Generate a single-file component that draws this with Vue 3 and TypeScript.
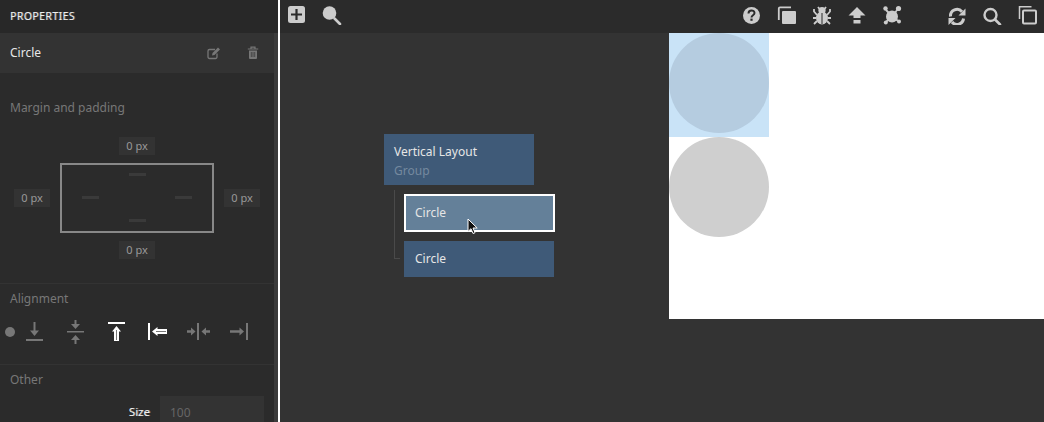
<script setup lang="ts">
const marginDashes = ['top', 'left', 'right', 'bottom']
</script>

<template>
  <div class="app">
    <aside class="panel">
      <div class="panel-header">PROPERTIES</div>
      <div class="panel-main">
        <div class="panel-scroll">
          <div class="selected-row">
            <span class="selected-name">Circle</span>
            <svg class="row-icon edit" width="14" height="14" viewBox="0 0 14 14">
              <path d="M10 7.500V11a1.500 1.500 0 0 1-1.500 1.500h-6A1.500 1.500 0 0 1 1 11V5a1.500 1.500 0 0 1 1.500-1.500H8" fill="none" stroke="#777" stroke-width="1.300" />
              <path d="M5 9.500 5.500 7 11 1.500l2 2L7.500 9z" fill="#777" />
            </svg>
            <svg class="row-icon trash" width="12" height="14" viewBox="0 0 12 14">
              <path d="M4 2.500V1.200h4v1.300M.8 3h10.400" fill="none" stroke="#777" stroke-width="1.200" />
              <path d="M2 4.500h8V12a1 1 0 0 1-1 1H3a1 1 0 0 1-1-1z" fill="#777" />
              <path d="M4.300 6v5M6 6v5M7.700 6v5" stroke="#333" stroke-width=".7" />
            </svg>
          </div>

          <section class="section margin-section">
            <h3 class="section-title">Margin and padding</h3>
            <div class="margin-widget">
              <span class="chip chip-top">0 px</span>
              <span class="chip chip-left">0 px</span>
              <div class="margin-box">
                <i v-for="d in marginDashes" :key="d" class="dash" :class="'dash-' + d"></i>
              </div>
              <span class="chip chip-right">0 px</span>
              <span class="chip chip-bottom">0 px</span>
            </div>
          </section>

          <section class="section align-section">
            <h3 class="section-title">Alignment</h3>
            <div class="align-row">
              <span class="align-dot"></span>
              <svg width="24" height="24" viewBox="0 0 24 24" fill="#777">
                <rect x="3" y="19" width="17" height="2" />
                <rect x="10.500" y="2" width="2" height="10" />
                <path d="M7 10.500h9l-4.500 5.500z" />
              </svg>
              <svg width="24" height="24" viewBox="0 0 24 24" fill="#777">
                <rect x="3" y="11" width="17" height="1.500" />
                <rect x="10.500" y="0" width="2" height="5" />
                <path d="M7 4h9l-4.500 5z" />
                <rect x="10.500" y="19" width="2" height="5" />
                <path d="M7 20h9l-4.500-5z" />
              </svg>
              <svg width="24" height="24" viewBox="0 0 24 24">
                <rect x="3" y="2" width="17" height="2" fill="#fff" />
                <path d="M11.500 6 7 11.500h2V21h5v-9.500h2z" fill="#fff" />
                <path d="M11.500 10v10" stroke="#777" stroke-width="1" />
              </svg>
              <svg width="24" height="24" viewBox="0 0 24 24">
                <rect x="2" y="3" width="2" height="17" fill="#fff" />
                <path d="M6 11.500 11.500 7v2H21v5h-9.500v2z" fill="#fff" />
                <path d="M10 11.500h10" stroke="#777" stroke-width="1" />
              </svg>
              <svg width="24" height="24" viewBox="0 0 24 24" fill="#777">
                <rect x="10" y="3" width="2" height="17" />
                <path d="M0 10.300h4V7.500l4.500 4L4 15.500v-2.800H0z" />
                <path d="M23 10.300h-4V7.500l-4.500 4 4.500 4v-2.800h4z" />
              </svg>
              <svg width="24" height="24" viewBox="0 0 24 24" fill="#777">
                <rect x="18" y="3" width="2" height="17" />
                <path d="M2 10.300h9.500V7.500l4.500 4-4.500 4v-2.800H2z" />
              </svg>
            </div>
          </section>

          <section class="section other-section">
            <h3 class="section-title">Other</h3>
            <div class="field-row">
              <label class="field-label">Size</label>
              <div class="field-input">100</div>
            </div>
          </section>
        </div>
        <div class="scrollbar"></div>
      </div>
    </aside>

    <main class="workspace">
      <header class="toolbar">
        <div class="tool-group">
          <svg class="tool" viewBox="0 0 20 20">
            <rect x="1" y="1" width="17" height="17" rx="2.500" fill="#ccc" />
            <path d="M9.500 4v11M4 9.500h11" stroke="#2b2b2b" stroke-width="2.200" />
          </svg>
          <svg class="tool" viewBox="0 0 20 20">
            <circle cx="7.500" cy="8" r="6.800" fill="#ccc" />
            <path d="M12.500 13.500 18 19" stroke="#ccc" stroke-width="2.600" stroke-linecap="round" />
          </svg>
        </div>
        <div class="tool-group group-main">
          <svg class="tool" viewBox="0 0 20 20">
            <circle cx="9.500" cy="10.500" r="8.500" fill="#ccc" />
            <path d="M6.500 8.500c0-4 6-4 6-.4 0 2.200-3 2.200-3 4.400" fill="none" stroke="#2b2b2b" stroke-width="2" />
            <rect x="8.400" y="13.600" width="2.200" height="2.200" fill="#2b2b2b" />
          </svg>
          <svg class="tool" viewBox="0 0 20 20">
            <path d="M1.800 15V3.500a1.200 1.200 0 0 1 1.200-1.200h11" fill="none" stroke="#ccc" stroke-width="1.800" />
            <rect x="5" y="6" width="14" height="13" rx="1" fill="#ccc" />
          </svg>
          <svg class="tool" viewBox="0 0 20 20">
            <ellipse cx="10" cy="13" rx="6" ry="6.500" fill="#ccc" />
            <circle cx="10" cy="5.500" r="3.600" fill="#ccc" />
            <path d="M10 8v11" stroke="#2b2b2b" stroke-width="1" />
            <path d="M5 10 2 6.500V4M15 10l3-3.500V4M4 13H1M16 13h3M5 16l-3 3M15 16l3 3M7.500 4 6 2M12.500 4 14 2" fill="none" stroke="#ccc" stroke-width="1.800" />
          </svg>
          <svg class="tool" viewBox="0 0 20 20">
            <path d="M10 2 1.500 10.500h5V13h7v-2.500h5z" fill="#ccc" />
            <rect x="6.500" y="15" width="7" height="3.500" fill="#ccc" />
          </svg>
          <svg class="tool" viewBox="0 0 20 20">
            <path d="M4 5l6 6 6-7M10 11l-6 6M10 11l6 5" stroke="#ccc" stroke-width="1.800" fill="none" />
            <circle cx="10" cy="11.500" r="6" fill="#ccc" />
            <circle cx="3.500" cy="3.500" r="2.200" fill="#ccc" />
            <circle cx="16.500" cy="3.500" r="2.600" fill="#ccc" />
            <circle cx="3.800" cy="17.500" r="2" fill="#ccc" />
            <circle cx="17" cy="16.500" r="2" fill="#ccc" />
          </svg>
        </div>
        <div class="tool-group">
          <svg class="tool" viewBox="0 0 20 20">
            <path d="M3.500 11.500A6.500 6.500 0 0 1 15 6.800" fill="none" stroke="#ccc" stroke-width="3" />
            <path d="M18.500 3.500v7h-7z" fill="#ccc" />
            <path d="M16.500 13.500A6.500 6.500 0 0 1 5 17" fill="none" stroke="#ccc" stroke-width="3" />
            <path d="M1.500 20v-7h7z" fill="#ccc" />
          </svg>
          <svg class="tool" viewBox="0 0 20 20">
            <circle cx="8.500" cy="10" r="6" fill="none" stroke="#ccc" stroke-width="2.400" />
            <path d="M13 14.500 18 19.500" stroke="#ccc" stroke-width="2.600" stroke-linecap="round" />
          </svg>
          <svg class="tool" viewBox="0 0 20 20">
            <path d="M2.500 14V1.800h12" fill="none" stroke="#ccc" stroke-width="1.500" />
            <rect x="6" y="5.500" width="13" height="13" rx="1" fill="none" stroke="#ccc" stroke-width="2" />
          </svg>
        </div>
      </header>

      <div class="canvas">
        <div class="tree">
          <div class="node group-node">
            <div class="node-title">Vertical Layout</div>
            <div class="node-type">Group</div>
          </div>
          <div class="children">
            <div class="node child selected">Circle</div>
            <div class="node child">Circle</div>
          </div>
          <svg class="cursor" width="13" height="18" viewBox="0 0 13 18">
            <path d="M1 1v12.500l3-2.800 2 4.800 2-.8-2-4.700h4.200z" fill="#111" stroke="#fff" stroke-width="1" />
          </svg>
        </div>

        <div class="page">
          <div class="page-item highlighted"><div class="circle"></div></div>
          <div class="page-item"><div class="circle"></div></div>
        </div>
      </div>
    </main>
  </div>
</template>

<style>
html,
body {
  margin: 0;
  background: #333;
}
</style>

<style scoped>
.app {
  display: flex;
  width: 1044px;
  height: 422px;
  overflow: hidden;
  font-family: "Noto Sans", "Open Sans", sans-serif;
  background: #333;
}

.panel {
  width: 280px;
  flex: none;
  display: flex;
  flex-direction: column;
  box-sizing: border-box;
  border-right: 2px solid #fff;
  background: #2b2b2b;
}

.panel-header {
  height: 33px;
  flex: none;
  padding-left: 10px;
  line-height: 32px;
  font-size: 10.500px;
  letter-spacing: 0.4px;
  color: #f0f0f0;
  text-shadow: 1px 0 0 rgba(255, 255, 255, 0.35);
  background: #282828;
}

.panel-main {
  flex: 1;
  display: flex;
  min-height: 0;
}

.panel-scroll {
  flex: 1;
  min-width: 0;
  overflow: hidden;
}

.scrollbar {
  width: 4px;
  flex: none;
  background: #3b3b3b;
}

.selected-row {
  height: 40px;
  display: flex;
  align-items: center;
  padding-left: 10px;
  background: #333;
}

.selected-name {
  flex: 1;
  padding-bottom: 2px;
  font-size: 12px;
  color: #e8e8e8;
}

.row-icon.edit {
  margin-right: 26px;
}

.row-icon.trash {
  margin-right: 15px;
}

.section-title {
  margin: 0;
  padding-left: 10px;
  font-size: 12px;
  line-height: 20px;
  font-weight: 400;
  color: #777;
}

.section {
  box-sizing: border-box;
}

.margin-section {
  padding-top: 25px;
  padding-bottom: 24px;
}

.margin-widget {
  margin: 19px 0 0 14px;
  display: grid;
  grid-template-columns: 36px 154px 36px;
  grid-template-rows: 18px 70px 18px;
  column-gap: 10px;
  row-gap: 8px;
  width: 246px;
  align-items: center;
  justify-items: center;
}

.chip {
  width: 36px;
  height: 18px;
  line-height: 18px;
  text-align: center;
  font-size: 11px;
  color: #999;
  background: #333;
}

.chip-top {
  grid-column: 2;
  grid-row: 1;
}

.chip-left {
  grid-column: 1;
  grid-row: 2;
}

.chip-right {
  grid-column: 3;
  grid-row: 2;
}

.chip-bottom {
  grid-column: 2;
  grid-row: 3;
}

.margin-box {
  grid-column: 2;
  grid-row: 2;
  width: 154px;
  height: 70px;
  box-sizing: border-box;
  border: 2px solid #888;
  padding: 8px 20px 9px;
  display: grid;
  grid-template-columns: 17px 1fr 17px;
  grid-template-rows: 3px 1fr 3px;
}

.dash {
  display: block;
  width: 17px;
  height: 3px;
  background: #3a3a3a;
}

.dash-top {
  grid-column: 2;
  grid-row: 1;
  justify-self: center;
}

.dash-left {
  grid-column: 1;
  grid-row: 2;
  align-self: center;
}

.dash-right {
  grid-column: 3;
  grid-row: 2;
  align-self: center;
}

.dash-bottom {
  grid-column: 2;
  grid-row: 3;
  justify-self: center;
}

.align-section {
  border-top: 1px solid #333;
  padding-top: 5px;
  padding-bottom: 20px;
}

.align-row {
  margin-top: 11px;
  display: flex;
  align-items: center;
  gap: 17px;
  padding-left: 5px;
}

.align-row svg {
  display: block;
  flex: none;
}

.align-dot {
  width: 10px;
  height: 10px;
  margin-right: -9px;
  border-radius: 50%;
  background: #777;
}

.other-section {
  border-top: 1px solid #333;
  padding-top: 5px;
}

.field-row {
  margin-top: 6px;
  display: flex;
  align-items: flex-start;
}

.field-label {
  width: 150px;
  padding-top: 7px;
  text-align: right;
  font-size: 11.500px;
  line-height: 18px;
  color: #f0f0f0;
  text-shadow: 1px 0 0 rgba(255, 255, 255, 0.35);
}

.field-input {
  width: 94px;
  height: 28px;
  margin-left: 10px;
  padding-left: 10px;
  line-height: 33px;
  font-size: 12px;
  color: #666;
  background: #333;
}

.workspace {
  flex: 1;
  min-width: 0;
  display: flex;
  flex-direction: column;
}

.toolbar {
  height: 33px;
  flex: none;
  box-sizing: border-box;
  display: flex;
  padding: 5px 7px 0;
  background: #2b2b2b;
}

.tool-group {
  display: flex;
  gap: 15px;
}

.group-main {
  margin-left: auto;
  margin-right: 45px;
}

.tool {
  width: 20px;
  height: 20px;
  display: block;
}

.canvas {
  flex: 1;
  position: relative;
  display: flex;
  justify-content: flex-end;
  align-items: flex-start;
  background: #333;
}

.tree {
  position: absolute;
  left: 104px;
  top: 101px;
  width: 171px;
}

.node {
  box-sizing: border-box;
  background: #3f5a78;
  color: #e6e6e6;
  font-size: 12px;
}

.group-node {
  width: 150px;
  height: 51px;
  padding: 9px 10px 0;
}

.node-title {
  line-height: 18px;
}

.node-type {
  margin-top: 1px;
  line-height: 18px;
  color: #75899f;
}

.children {
  position: relative;
  margin: 9px 0 0 20px;
  display: flex;
  flex-direction: column;
  gap: 9px;
}

.children::before {
  content: "";
  position: absolute;
  left: -10px;
  top: -4px;
  width: 6px;
  height: 69px;
  box-sizing: border-box;
  border-left: 1px solid #4a4a4a;
  border-bottom: 1px solid #4a4a4a;
}

.child {
  position: relative;
  width: 150px;
  height: 36px;
  line-height: 36px;
  padding-left: 11px;
}

.child.selected {
  width: 151px;
  height: 38px;
  border: 2px solid #fff;
  padding-left: 9px;
  line-height: 33px;
  background: #648099;
}

.cursor {
  position: absolute;
  left: 83px;
  top: 84px;
}

.page {
  width: 375px;
  height: 286px;
  background: #fff;
}

.page-item {
  width: 100px;
  height: 100px;
}

.page-item.highlighted {
  height: 104px;
  background: #c9e3f7;
}

.circle {
  width: 100px;
  height: 100px;
  box-sizing: border-box;
  border-radius: 50%;
  background: #cfcfcf;
}

.highlighted .circle {
  background: #b5cce0;
}
</style>
